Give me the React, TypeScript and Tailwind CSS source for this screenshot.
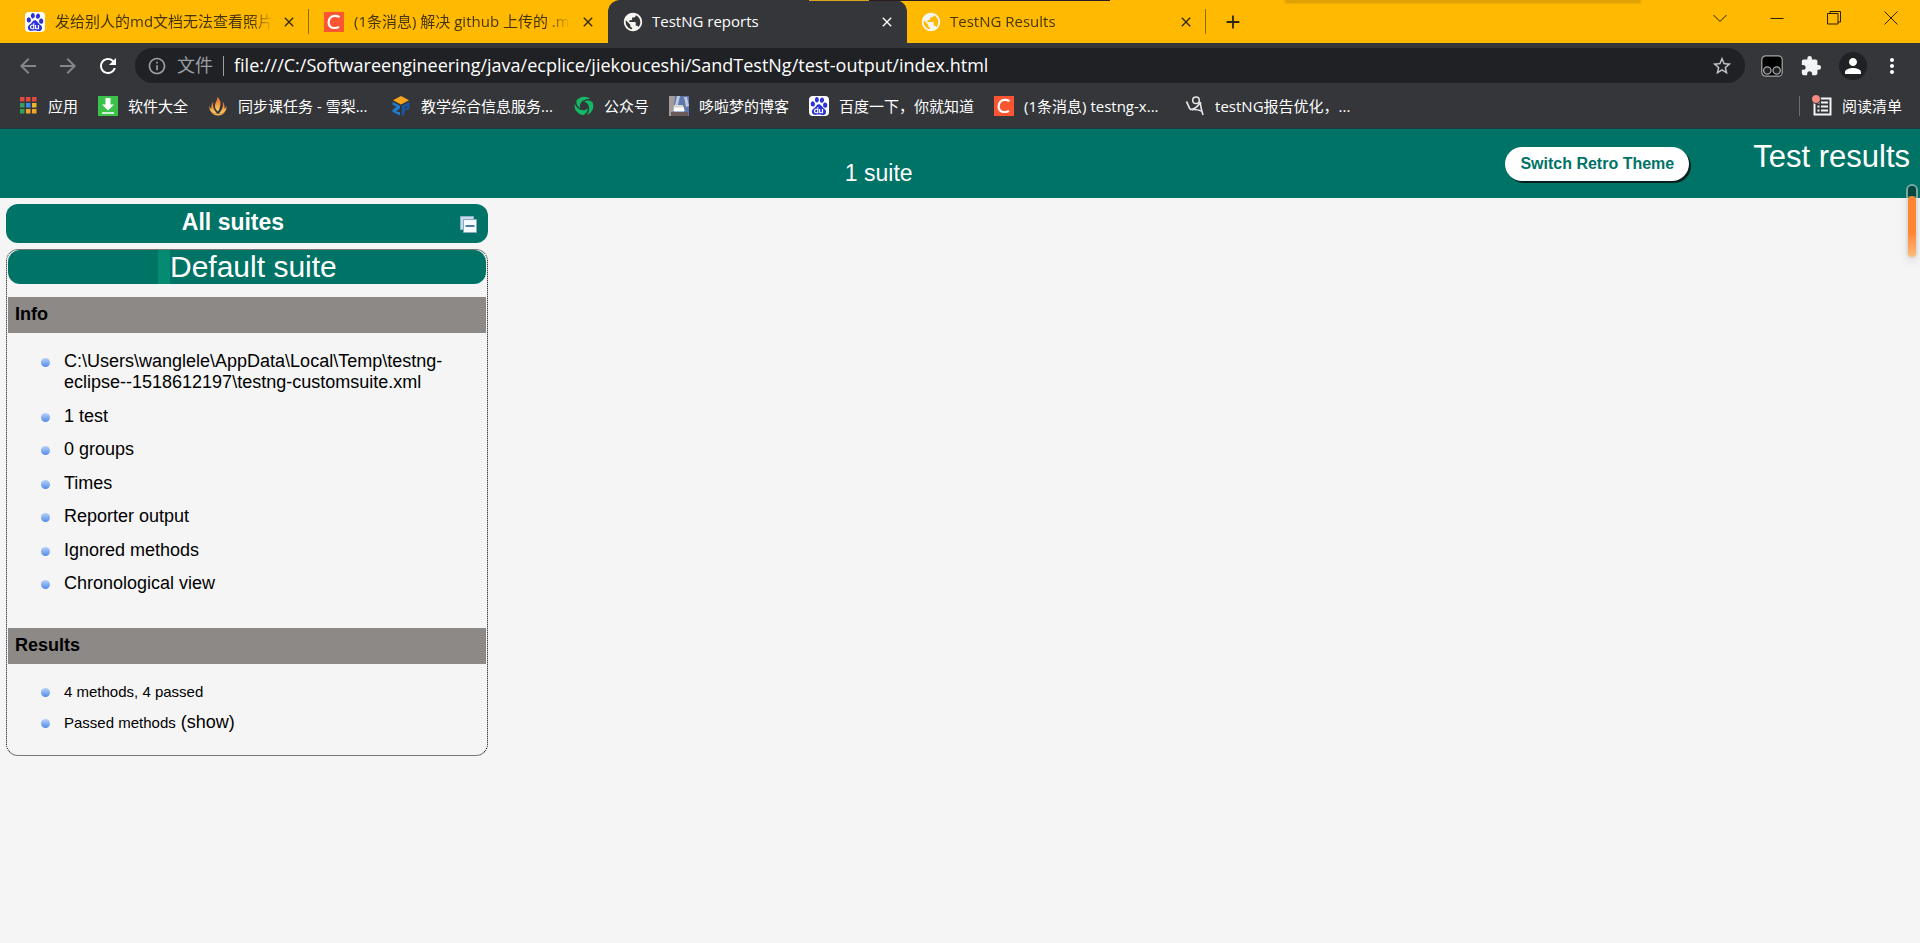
import type { ReactNode } from "react";
import { MdArrowBack, MdArrowForward, MdRefresh, MdInfoOutline, MdStarBorder, MdExtension, MdPerson, MdMoreVert, MdClose, MdAdd, MdPublic } from "react-icons/md";
import { SiBaidu } from "react-icons/si";

const UI = "font-['Open_Sans','Noto_Sans_CJK_SC',sans-serif]";
const ARIAL = "font-['Liberation_Sans',Arial,sans-serif]";

function Baidu() {
  return (
    <span className="flex size-5 shrink-0 items-center justify-center rounded-sm bg-white text-[#2a32d8]">
      <SiBaidu className="size-[18px]" />
    </span>
  );
}

function Csdn() {
  return (
    <svg viewBox="0 0 20 20" className="size-5 shrink-0" aria-hidden="true">
      <rect width="20" height="20" fill="#fc5531" />
      <path d="M15.500 5.200C14 4.200 12.600 3.900 11 3.900 7 3.900 4.600 6.600 4.600 10.200 4.600 13.700 6.800 16 10.400 16 12.200 16 13.700 15.700 15 15" fill="none" stroke="#fff" strokeWidth="2.200" />
    </svg>
  );
}

function Globe() {
  return <MdPublic className="-mx-0.5 size-[22px] shrink-0" />;
}

function Apps() {
  const colors = ["#e04a3f", "#e04a3f", "#e04a3f", "#34a05a", "#3f8ae8", "#f0b428", "#34a05a", "#f0a428", "#f0a428"];
  return (
    <svg viewBox="0 0 20 20" className="size-5 shrink-0" aria-hidden="true">
      {colors.map((c, i) => (
        <rect key={i} x={2 + (i % 3) * 6} y={1 + Math.floor(i / 3) * 6} width="4.500" height="4.500" fill={c} />
      ))}
    </svg>
  );
}

function Download() {
  return (
    <svg viewBox="0 0 20 20" className="size-5 shrink-0" aria-hidden="true">
      <rect width="20" height="20" fill="#3cc24a" />
      <path d="M7.500 2h5v6.500H16L10 14.500 4 8.500h3.500zM4 16.300h12v1.500H4z" fill="#fff" />
    </svg>
  );
}

function Flame() {
  return (
    <svg viewBox="0 0 20 20" className="size-5 shrink-0" aria-hidden="true">
      <defs>
        <linearGradient id="flame" x1="0" y1="0" x2="0" y2="1">
          <stop offset="0" stopColor="#d9643a" />
          <stop offset="0.500" stopColor="#f09a3c" />
          <stop offset="1" stopColor="#f8cf6a" />
        </linearGradient>
      </defs>
      <g fill="url(#flame)">
        <path d="M9.500.5c2.500 3 3.500 5.500 2.800 8.500-.4 2.500-.8 4.500-2.300 6.500-2.500-2-3.700-4.500-2.800-7.500C8 5.500 9.500 3.500 9.500.5Z" />
        <path d="M5.500 5.500C4.500 9 5 13 9 17.500c-4 1-8.500-2-7.500-8 .500 2 1 2.500 1.800 3.500C3.200 10 3.500 7.500 5.500 5.500Z" />
        <path d="M14.500 5.500c1 3.500.500 7.500-3.500 12 4 1 8.300-2 7.300-8-.500 2-1 2.500-1.800 3.500C16.800 10 16.500 7.500 14.500 5.500Z" />
        <path d="M3 15.500c3 3 10.500 3 14 0-2 5.300-12 5.300-14 0Z" />
      </g>
    </svg>
  );
}

function Cube() {
  return (
    <svg viewBox="0 0 20 20" className="size-5 shrink-0" aria-hidden="true">
      <path d="M10 0 18 4.200 10 8.400 2 4.200Z" fill="#f9a61c" />
      <path d="M1.500 6 9 9.800v2.400L5 15.500l4 .8V19.500L1.500 15.800V14l4-3.200-4-2.300Z" fill="#1f7cd0" />
      <path d="M18.500 6 11 9.800V20l2.500-1.500v-3.400l5-2.600Zm-5 5.200 2.800-1.400v1.700l-2.800 1.500Z" fill="#1559a8" />
    </svg>
  );
}

function Swirl() {
  return (
    <svg viewBox="0 0 20 20" className="size-5 shrink-0" aria-hidden="true">
      <g fill="#12b863">
        {[0, 120, 240].map((a) => (
          <path key={a} transform={`rotate(${a} 10 10)`} d="M2.500 4.500A9.600 9.600 0 0 1 16.500 3C12 2.500 8.500 4 6.500 7.500 5.800 9 5.600 10.500 6 12.300 3.300 10.500 2 7.500 2.500 4.500Z" />
        ))}
      </g>
    </svg>
  );
}

function Photo() {
  return (
    <svg viewBox="0 0 20 20" className="size-5 shrink-0" aria-hidden="true">
      <rect width="20" height="20" fill="#5f78ac" />
      <path d="M0 0h6l-1 9-2 11H0Z" fill="#a39a9a" />
      <path d="M8 0h3l-2 9H6ZM15 1h3l2 9-3 1Z" fill="#bcc8de" />
      <path d="M5 9h9l2 6H4Z" fill="#d8d4d0" />
      <path d="M2 16h17v4H2Z" fill="#6a5a58" />
      <path d="M5 11.500h10v4H5Z" fill="#fff" />
    </svg>
  );
}

function Figure() {
  return (
    <svg viewBox="0 0 20 20" className="size-5 shrink-0" fill="none" stroke="#e8e8ea" aria-hidden="true">
      <circle cx="11" cy="4.200" r="3.300" strokeWidth="1.500" />
      <path d="M1.500 5.500C3 8 3.500 11.500 5.500 13.500 9 13.500 12.500 11 15.500 6" strokeWidth="1.700" />
      <path d="M15.300 6C15.500 10 16.500 14 18 19M7 13.600c3-.3 6 0 9.500 1.400" strokeWidth="1.600" />
    </svg>
  );
}

type TabProps = { icon: ReactNode; title: string; active?: boolean; divider?: boolean };

function Tab({ icon, title, active, divider }: TabProps) {
  return (
    <div className={active ? "relative flex h-[43px] w-[299px] items-center rounded-t-xl bg-[#35363a] pr-3 pl-4 text-white" : "relative flex h-[43px] w-[299px] items-center pr-3 pl-[15px] text-[#46360a]"}>
      <button type="button" className="flex min-w-0 flex-1 items-center gap-2.5 text-left">
        <span className="text-[#f8f6f0]">{icon}</span>
        <span className={active ? "whitespace-nowrap" : "mr-2.5 flex-1 mask-r-from-90% mask-r-to-100% whitespace-nowrap"}>{title}</span>
      </button>
      <button type="button" aria-label="关闭标签页" className={active ? "text-white" : "text-[#33290c]"}>
        <MdClose className="size-4" />
      </button>
      {divider && <span className="absolute top-[9px] right-0 h-[25px] w-px bg-[#8f6b0c]" />}
    </div>
  );
}

function Bookmark({ icon, label, className }: { icon: ReactNode; label: string; className?: string }) {
  return (
    <a href="#" className={`flex items-center gap-2.5 whitespace-nowrap ${className ?? ""}`}>
      {icon}
      {label}
    </a>
  );
}

function WindowButton({ label, children }: { label: string; children: ReactNode }) {
  return (
    <button type="button" aria-label={label} className="flex h-9 w-[57px] items-center justify-center">
      <svg viewBox="0 0 14 14" className="size-3.5" fill="none" stroke="#2b2008" strokeWidth="1">
        {children}
      </svg>
    </button>
  );
}

function TabStrip() {
  return (
    <div className="relative flex h-[43px] bg-[#ffb900] pr-px pl-2.5 text-[15px]">
      <Tab icon={<Baidu />} title="发给别人的md文档无法查看照片" divider />
      <Tab icon={<Csdn />} title="(1条消息) 解决 github 上传的 .m" />
      <Tab icon={<Globe />} title="TestNG reports" active />
      <Tab icon={<Globe />} title="TestNG Results" divider />
      <button type="button" aria-label="新标签页" className="ml-4 text-[#2e250b]">
        <MdAdd className="size-[22px]" />
      </button>
      <div className="ml-auto flex">
        <WindowButton label="搜索标签页"><path d="m.5 4 6.500 6.500L13.500 4" /></WindowButton>
        <WindowButton label="最小化"><path d="M.5 7.500h13" /></WindowButton>
        <WindowButton label="还原"><path d="M.5 2.500h10.500v10.500H.5zM3 2.500v-2h10.500v10.500H11" /></WindowButton>
        <WindowButton label="关闭"><path d="m.5.5 13 13m0-13-13 13" /></WindowButton>
      </div>
      <span className="absolute top-0 left-[809px] h-px w-[60px] bg-[#d9a520]" />
      <span className="absolute top-0 left-[869px] h-px w-[241px] bg-[#2a1c1c]" />
      <span className="absolute top-0 left-[1285px] h-[3px] w-[356px] bg-[#d39a06] blur-[1px]" />
    </div>
  );
}

function Toolbar() {
  return (
    <div className="flex items-center bg-[#35363a] pt-[5px] pr-4 pl-4">
      <div className="flex w-[119px] items-center gap-4">
        <button type="button" aria-label="后退" className="text-[#85868a]"><MdArrowBack className="size-6" /></button>
        <button type="button" aria-label="前进" className="text-[#85868a]"><MdArrowForward className="size-6" /></button>
        <button type="button" aria-label="重新加载" className="text-white"><MdRefresh className="size-6" /></button>
      </div>
      <div className="flex h-[35px] flex-1 items-center rounded-full bg-[#202124] pr-3 pl-3">
        <MdInfoOutline className="size-5 text-[#9aa0a6]" />
        <span className="ml-2.5 text-[18px] text-[#9aa0a6]">文件</span>
        <span className="mx-2.5 h-5 w-px bg-[#9aa0a6]" />
        <input aria-label="地址栏" defaultValue="file:///C:/Softwareengineering/java/ecplice/jiekouceshi/SandTestNg/test-output/index.html" className="min-w-0 flex-1 bg-transparent text-[18px] text-white outline-none" />
        <button type="button" aria-label="收藏" className="text-[#c3c5c9]"><MdStarBorder className="size-[22px]" /></button>
      </div>
      <div className="ml-4 flex items-center gap-[17px]">
        <button type="button" aria-label="扩展程序">
          <svg viewBox="0 0 22 22" className="size-[22px]" fill="#000" stroke="#a6a7aa">
            <rect x=".8" y=".8" width="20.400" height="20.400" rx="4" strokeWidth="1.200" />
            <circle cx="6.300" cy="15.500" r="3.700" fill="#222" strokeWidth="1.300" />
            <circle cx="15.700" cy="15.500" r="3.700" fill="#222" strokeWidth="1.300" />
          </svg>
        </button>
        <button type="button" aria-label="管理扩展" className="text-[#f1f3f4]"><MdExtension className="size-[22px]" /></button>
        <button type="button" aria-label="用户" className="flex size-7 items-center justify-center rounded-full bg-[#202124] text-white"><MdPerson className="size-6" /></button>
        <button type="button" aria-label="菜单" className="-ml-1 text-white"><MdMoreVert className="size-6" /></button>
      </div>
    </div>
  );
}

function Bookmarks() {
  return (
    <div className="flex h-[46px] items-center gap-5 border-b border-[#1c3f3e] bg-[#35363a] pt-px pr-[18px] pl-[18px] text-[15px] text-white">
      <Bookmark icon={<Apps />} label="应用" />
      <Bookmark icon={<Download />} label="软件大全" />
      <Bookmark icon={<Flame />} label="同步课任务 - 雪梨..." className="min-w-[163px]" />
      <Bookmark icon={<Cube />} label="教学综合信息服务..." className="min-w-[163px]" />
      <Bookmark icon={<Swirl />} label="公众号" />
      <Bookmark icon={<Photo />} label="哆啦梦的博客" />
      <Bookmark icon={<Baidu />} label="百度一下，你就知道" />
      <Bookmark icon={<Csdn />} label="(1条消息) testng-x..." className="min-w-[171px]" />
      <Bookmark icon={<Figure />} label="testNG报告优化，..." />
      <div className="ml-auto flex items-center gap-3">
        <span className="h-5 w-px bg-[#6b6c70]" />
        <button type="button" className="flex items-center gap-2.5">
          <svg viewBox="0 0 20 22" className="h-[22px] w-5" aria-hidden="true">
            <path d="M2.500 3.500h16v16h-16z" fill="none" stroke="#f1f3f4" strokeWidth="2" />
            <path d="M5.500 7.500h2M9 7.500h7M5.500 11.500h2M9 11.500h7M5.500 15.500h2M9 15.500h7" stroke="#f1f3f4" strokeWidth="1.800" />
            <circle cx="4" cy="4" r="4.500" fill="#f28b82" stroke="#35363a" />
          </svg>
          阅读清单
        </button>
      </div>
    </div>
  );
}

function Item({ children }: { children: ReactNode }) {
  return (
    <li className="flex gap-[14px] leading-[21px]">
      <span className="mt-[7px] size-[9px] shrink-0 rounded-full bg-linear-to-b from-[#b9d2fb] to-[#5289e6]" />
      <span>{children}</span>
    </li>
  );
}

const infoLinks = ["1 test", "0 groups", "Times", "Reporter output", "Ignored methods", "Chronological view"];

export default function App() {
  return (
    <div className={`flex min-h-screen flex-col bg-[#f5f5f5] ${UI}`}>
      <TabStrip />
      <Toolbar />
      <Bookmarks />
      <div className={`flex-1 ${ARIAL} text-[18px] text-black`}>
        <header className="relative flex h-[69px] items-start bg-[#007367] pr-[10px] pl-[44%] text-white">
          <span className="mt-[31px] text-[23px] leading-[27px]">1 suite</span>
          <button type="button" className="mt-[18px] mr-16 ml-auto h-[34px] rounded-full bg-white px-[15px] text-[16px] font-bold text-[#007367] shadow-[2px_2px_0_#04211e]">
            Switch Retro Theme
          </button>
          <h1 className="mt-[10px] text-[31px] leading-[35px]">Test results</h1>
          <div className="absolute top-[55px] right-[2px] flex h-[75px] w-3 flex-col rounded-md border-2 border-[#c9cfcd]/60 shadow-[0_4px_8px_rgba(0,0,0,0.08)]">
            <span className="h-2.5 rounded-t bg-[#03463f]" />
            <span className="flex-1 rounded-sm bg-linear-to-b from-[#ff8533] from-60% to-[#fbbb77]" />
          </div>
        </header>
        <nav className="mt-1.5 ml-1.5 w-[482px]">
          <div className="relative flex h-[39px] items-center justify-center rounded-xl bg-[#007367] pr-7 pb-0.5 text-[23px] font-bold text-white">
            All suites
            <button type="button" aria-label="Collapse all" className="absolute top-3 right-[11px]">
              <svg viewBox="0 0 17 17" className="size-[17px]">
                <path d="M.5.5h13v13H.5z" fill="#c3dbea" stroke="#8fb4c9" />
                <path d="M3.500 3.500h13v13h-13z" fill="#f4fafe" stroke="#8aa9bf" />
                <path d="M5.500 10h9" stroke="#3c6f96" strokeWidth="1.800" />
              </svg>
            </button>
          </div>
          <section className="mt-1.5 rounded-xl border border-dotted border-black border-t-[#777] border-b-[#777] px-px pb-[22px] [border-bottom-style:solid] [border-top-style:solid]">
            <h2 className="flex h-[34px] items-stretch rounded-xl bg-[#007367] pl-[150px] text-[30px] leading-[34px] text-white">
              <span className="w-3 bg-[#058b72]" />
              Default suite
            </h2>
            <h3 className="mt-[13px] h-9 bg-[#8d8987] pl-[7px] leading-[35px] font-bold">Info</h3>
            <ul className="mt-[18px] flex h-[243px] flex-col justify-between pl-[33px]">
              <Item>
                C:\Users\wanglele\AppData\Local\Temp\testng-
                <br />
                eclipse--1518612197\testng-customsuite.xml
              </Item>
              {infoLinks.map((label) => (
                <Item key={label}><a href="#">{label}</a></Item>
              ))}
            </ul>
            <h3 className="mt-[34px] h-9 bg-[#8d8987] pl-[7px] leading-[35px] font-bold">Results</h3>
            <ul className="mt-[17px] flex flex-col gap-2.5 pl-[33px]">
              <Item><span className="text-[15px]">4 methods, 4 passed</span></Item>
              <Item><span className="text-[15px]">Passed methods</span> <a href="#">(show)</a></Item>
            </ul>
          </section>
        </nav>
      </div>
    </div>
  );
}
